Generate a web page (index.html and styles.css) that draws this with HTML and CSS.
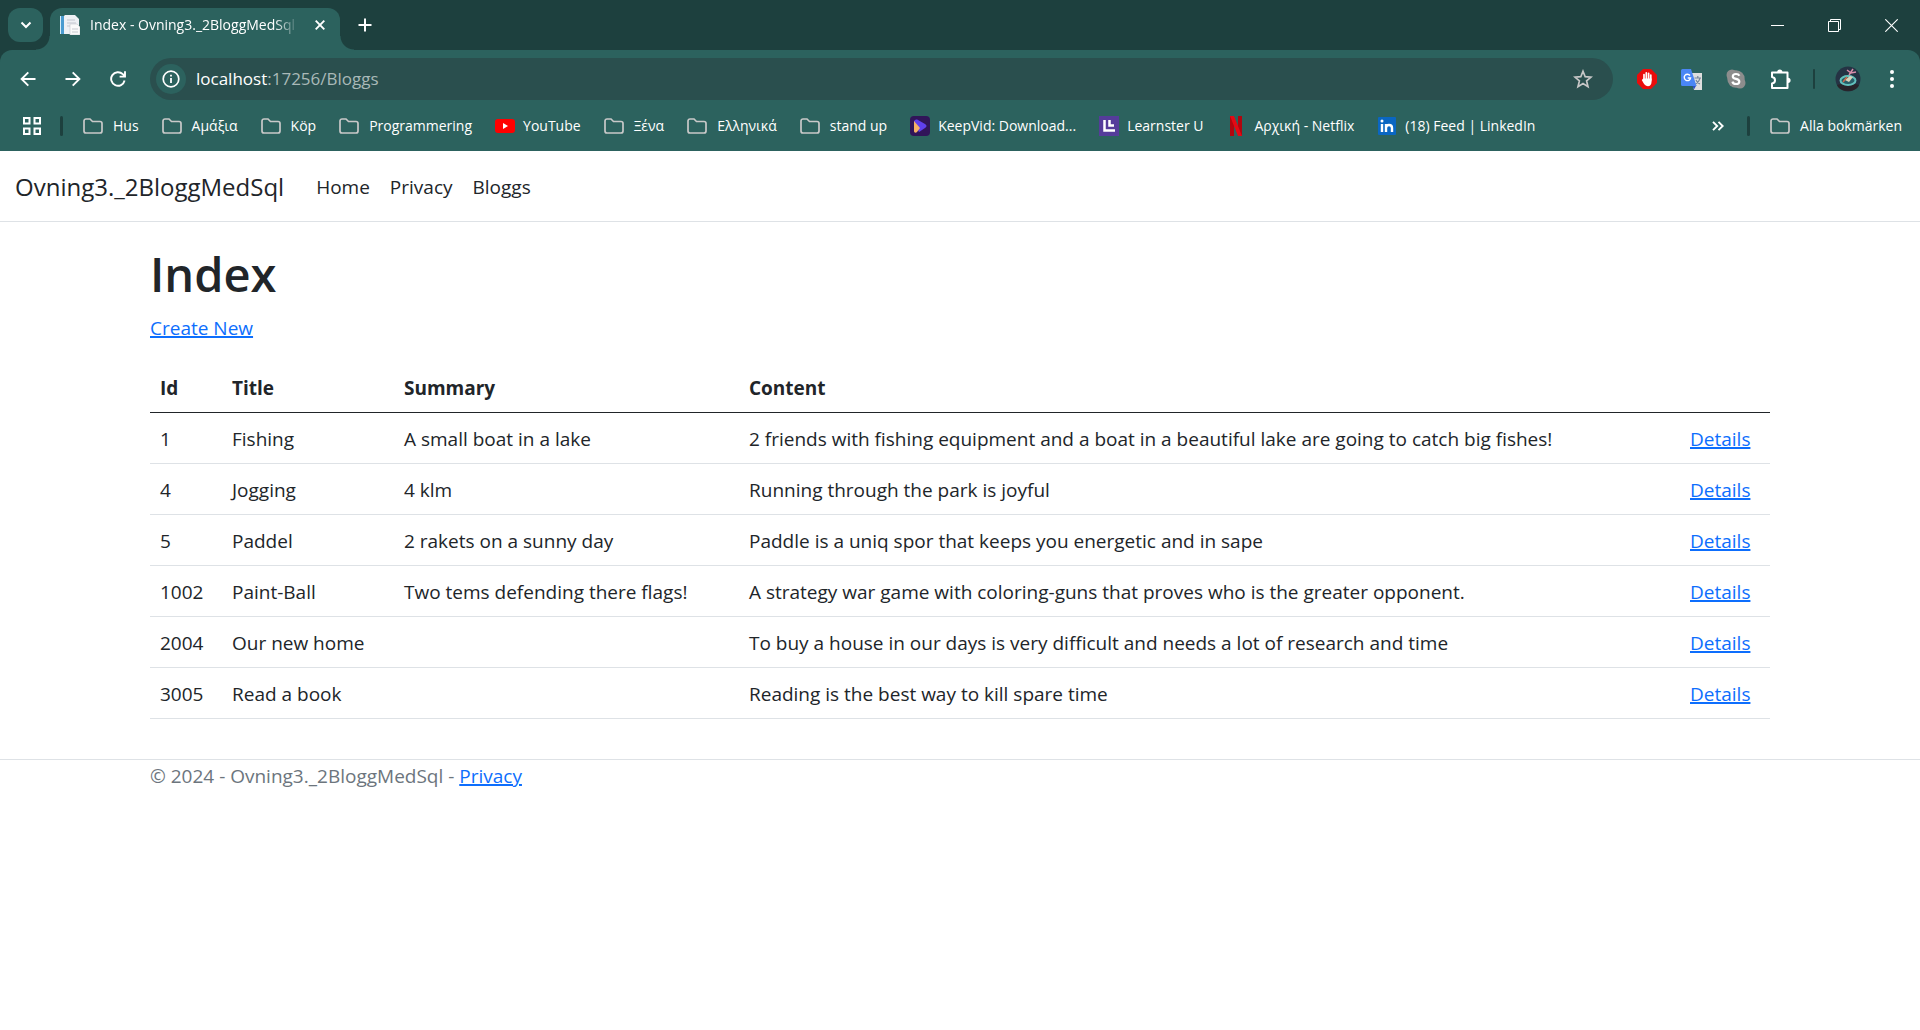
FILE: index.html
```html
<!DOCTYPE html>
<html lang="sv">
<head>
<meta charset="utf-8">
<title>Index - Ovning3._2BloggMedSql</title>
<link rel="stylesheet" href="styles.css">
</head>
<body>
<svg width="0" height="0" class="defs" aria-hidden="true">
  <symbol id="folder" viewBox="0 0 20 16"><path d="M1 3a2 2 0 0 1 2-2h4l2.500 2.500H17a2 2 0 0 1 2 2V13a2 2 0 0 1-2 2H3a2 2 0 0 1-2-2z" fill="none" stroke="#c9c9c9" stroke-width="1.700"/></symbol>
</svg>
<div class="browser">
  <div class="titlebar">
    <button class="tab-search" aria-label="Search tabs"><svg width="12" height="8" viewBox="0 0 12 8"><path d="M1.500 1.500 6 6l4.500-4.500" fill="none" stroke="#fff" stroke-width="2"/></svg></button>
    <div class="tab">
      <svg width="20" height="20" viewBox="0 0 20 20"><path d="M0 1h5v18H0z" fill="#4a9bd0"/><path d="M0 1h1v18H0z" fill="#d8ecf7"/><path d="M5 0h10l4 4v15H4V1z" fill="#eef0f4"/><path d="M7 5h8M7 8h9M7 11h4" stroke="#c3c6cf"/><path d="M10 9h7l3 3v8H10z" fill="#fafafa" stroke="#c8cad0" stroke-width=".6"/><path d="M12 14h6M12 17h6" stroke="#c8cad0"/></svg>
      <span class="tab-title">Index - Ovning3._2BloggMedSql</span>
      <button class="plain" aria-label="Close tab"><svg width="10" height="10" viewBox="0 0 10 10"><path d="m.7.7 8.600 8.600M9.300.7.7 9.300" stroke="#fff" stroke-width="1.900"/></svg></button>
    </div>
    <button class="plain new-tab" aria-label="New tab"><svg width="14" height="14" viewBox="0 0 14 14"><path d="M7 .5v13M.5 7h13" stroke="#fff" stroke-width="2"/></svg></button>
    <div class="window-buttons">
      <button class="plain" aria-label="Minimize"><svg width="13" height="13" viewBox="0 0 13 13"><path d="M0 6.500h13" stroke="#fff"/></svg></button>
      <button class="plain" aria-label="Restore"><svg width="13" height="13" viewBox="0 0 13 13"><path d="M.5 2.500h10v10H.5zM2.500 2V.5h10v10H11" fill="none" stroke="#fff"/></svg></button>
      <button class="plain" aria-label="Close"><svg width="13" height="13" viewBox="0 0 13 13"><path d="m.3.3 12.400 12.400M12.700.3.3 12.700" stroke="#fff" stroke-width="1.100"/></svg></button>
    </div>
  </div>
  <div class="toolbar">
    <div class="nav-buttons">
      <button class="plain" aria-label="Back"><svg width="16" height="16" viewBox="0 0 16 16"><path d="M15.500 8H2M8.300 1.300 1.600 8l6.700 6.700" fill="none" stroke="#fff" stroke-width="1.900"/></svg></button>
      <button class="plain" aria-label="Forward"><svg width="16" height="16" viewBox="0 0 16 16"><path d="M.5 8H14M7.700 1.300 14.400 8l-6.700 6.700" fill="none" stroke="#fff" stroke-width="1.900"/></svg></button>
      <button class="plain" aria-label="Reload"><svg width="16" height="16" viewBox="0 0 16 16"><path d="M14.600 9.500A6.800 6.800 0 1 1 12.800 3.200L15 5.500M15 .3v5.300H9.600" fill="none" stroke="#fff" stroke-width="1.900"/></svg></button>
    </div>
    <div class="omnibox">
      <button class="site-info" aria-label="Site information"><svg width="18" height="18" viewBox="0 0 18 18"><circle cx="9" cy="9" r="7.800" fill="none" stroke="#fff" stroke-width="1.700"/><path d="M9 8v5M9 4.800v1.800" stroke="#fff" stroke-width="1.800"/></svg></button>
      <div class="address"><span class="host">localhost</span>:17256/Bloggs</div>
      <button class="plain" aria-label="Bookmark this page"><svg width="20" height="20" viewBox="0 0 20 20"><path d="m10 2.200 2.200 5.500 5.900.4-4.500 3.800 1.400 5.800-5-3.200-5 3.200 1.400-5.800L1.900 8.100l5.900-.4z" fill="none" stroke="#c7c7c7" stroke-width="1.700"/></svg></button>
    </div>
    <div class="extensions">
      <button class="plain" aria-label="AdBlock"><svg width="20" height="20" viewBox="0 0 20 20"><path d="M6 0h8l6 6v8l-6 6H6l-6-6V6z" fill="#ea0c0c"/><path d="M7 12V5.500M9.300 10V3.800M11.600 10V4.300M13.800 11V6" stroke="#fff" stroke-width="1.700" stroke-linecap="round"/><path d="M6.200 9.500h8.400v3c0 3-1.500 4.700-3.700 4.700-2.600 0-3.500-1.700-4.600-3.400L4.800 11z" fill="#fff"/></svg></button>
      <button class="plain" aria-label="Google Translate"><svg width="21" height="21" viewBox="0 0 21 21"><path d="M9 4h12v17h-8z" fill="#dedede"/><path d="M13.500 9H20M16.800 7v2M19 9c-.6 3-2.500 5-4.500 6M15 11c.8 2 2.500 3.500 4 4" fill="none" stroke="#75869a" stroke-width="1.200"/><path d="M11 16h4.500L13 20.500z" fill="#2d4fc0"/><path d="M1.500 0H10l5.500 17H1.500A1.500 1.500 0 0 1 0 15.500v-14A1.500 1.500 0 0 1 1.500 0z" fill="#4a86f5"/><path d="M9 6.500A3.200 3.200 0 1 0 9.600 9H6.700" fill="none" stroke="#fff" stroke-width="1.400"/></svg></button>
      <button class="plain" aria-label="Skype"><svg width="20" height="20" viewBox="0 0 20 20"><circle cx="10" cy="10" r="8.700" fill="#8d8d8d"/><circle cx="6" cy="6" r="5.500" fill="#8d8d8d"/><circle cx="14" cy="14" r="5.500" fill="#8d8d8d"/><path d="M13.400 6.800C12.600 5.300 11.500 5 10 5 8 5 6.800 6 6.800 7.400c0 3.300 6.500 1.700 6.500 5 0 1.600-1.400 2.600-3.300 2.600-1.800 0-3.100-.8-3.600-2.400" fill="none" stroke="#fff" stroke-width="2.200"/></svg></button>
      <button class="plain" aria-label="Extensions"><svg width="21" height="21" viewBox="0 0 21 21"><path d="M2 3.500H17.500V19H2V14.500c4-.5 4-6 0-6.500z" fill="none" stroke="#fff" stroke-width="2" stroke-linejoin="round"/><path d="M7.200 3a2.600 2.600 0 0 1 5.200 0zM18 8.700a2.600 2.600 0 0 1 0 5.200z" fill="#fff"/></svg></button>
      <span class="separator thin"></span>
      <button class="plain" aria-label="Profile"><svg width="26" height="26" viewBox="0 0 26 26"><circle cx="13" cy="13" r="12.500" fill="#253344"/><path d="M2 19c6-2 16-2 22 0-3 8-19 8-22 0" fill="#28242a"/><ellipse cx="13" cy="14.500" rx="7.500" ry="4.500" fill="#285e68" stroke="#62c1bd" stroke-width="2"/><path d="m10 14 5-4 3 1-4 5z" fill="#d9d3bb"/><path d="m14 9 4-6M12 4l4 3 5-1" fill="none" stroke="#d88dac" stroke-width="1.500"/><path d="m8 16 4-5" stroke="#cf694d" stroke-width="1.500"/></svg></button>
      <button class="plain menu" aria-label="Menu"><svg width="4" height="18" viewBox="0 0 4 18"><g fill="#fff"><circle cx="2" cy="2" r="2"/><circle cx="2" cy="9" r="2"/><circle cx="2" cy="16" r="2"/></g></svg></button>
    </div>
  </div>
  <nav class="bookmarks" aria-label="Bookmarks">
    <button class="plain" aria-label="Tab groups"><svg width="18" height="18" viewBox="0 0 18 18"><path d="M1 1h5.500v5.500H1zM11.500 1H17v5.500h-5.500zM1 11.500h5.500V17H1zM11.500 11.500H17V17h-5.500z" fill="none" stroke="#fff" stroke-width="2"/></svg></button>
    <span class="separator"></span>
    <div class="bookmark-list">
      <a href="#"><svg width="20" height="16"><use href="#folder"/></svg>Hus</a>
      <a href="#"><svg width="20" height="16"><use href="#folder"/></svg>Αμάξια</a>
      <a href="#"><svg width="20" height="16"><use href="#folder"/></svg>Köp</a>
      <a href="#"><svg width="20" height="16"><use href="#folder"/></svg>Programmering</a>
      <a href="#" class="site"><svg width="20" height="14" viewBox="0 0 20 14"><rect width="20" height="14" rx="3" fill="#f00"/><path d="m8 4 5 3-5 3z" fill="#fff"/></svg>YouTube</a>
      <a href="#"><svg width="20" height="16"><use href="#folder"/></svg>Ξένα</a>
      <a href="#"><svg width="20" height="16"><use href="#folder"/></svg>Ελληνικά</a>
      <a href="#"><svg width="20" height="16"><use href="#folder"/></svg>stand up</a>
      <a href="#" class="site"><svg width="20" height="20" viewBox="0 0 20 20"><rect width="20" height="20" rx="4" fill="#311559"/><path d="M4 6c0-2 2-3 4-2l7 4c2 1 2 3 0 4l-6 4z" fill="#6040ee"/><path d="m4 5 6 7-3 4c-1 1-3 1-3-1z" fill="#f7b166"/></svg>KeepVid: Download...</a>
      <a href="#" class="site"><svg width="20" height="20" viewBox="0 0 20 20"><path d="M0 0h20v20H0z" fill="#553c9a"/><path d="M5.500 4v10.500H16M10.500 4v5.500H15" fill="none" stroke="#fff" stroke-width="2.500"/></svg>Learnster U</a>
      <a href="#" class="site"><svg width="20" height="20" viewBox="0 0 20 20"><path d="M4 0h4v20H4zM12 0h4v20h-4z" fill="#b1060f"/><path d="M4 0h4l8 20h-4z" fill="#e50914"/></svg>Αρχική - Netflix</a>
      <a href="#" class="site"><svg width="20" height="18" viewBox="0 0 20 18"><rect x="1" width="18" height="18" rx="1" fill="#0a66c2"/><path d="M5 7v8M9 7v8M9 11c0-4 6-4 6 0v4" fill="none" stroke="#fff" stroke-width="2.400"/><circle cx="5" cy="4" r="1.500" fill="#fff"/></svg>(18) Feed | LinkedIn</a>
    </div>
    <button class="plain more" aria-label="More bookmarks"><svg width="12" height="10" viewBox="0 0 12 10"><path d="m1 .8 4.200 4.200L1 9.200M6.500.8 10.700 5 6.500 9.200" fill="none" stroke="#fff" stroke-width="1.900"/></svg></button>
    <span class="separator"></span>
    <a href="#"><svg width="20" height="16"><use href="#folder"/></svg>Alla bokmärken</a>
  </nav>
</div>
<header class="navbar">
  <a href="#" class="brand">Ovning3._2BloggMedSql</a>
  <nav class="nav-links"><a href="#">Home</a><a href="#">Privacy</a><a href="#">Bloggs</a></nav>
</header>
<main class="container">
  <h1>Index</h1>
  <p><a href="#">Create New</a></p>
  <table>
    <colgroup><col class="col-id"><col class="col-title"><col class="col-summary"><col><col class="col-actions"></colgroup>
    <thead><tr><th>Id</th><th>Title</th><th>Summary</th><th>Content</th><th></th></tr></thead>
    <tbody>
      <tr><td>1</td><td>Fishing</td><td>A small boat in a lake</td><td>2 friends with fishing equipment and a boat in a beautiful lake are going to catch big fishes!</td><td><a href="#">Details</a></td></tr>
      <tr><td>4</td><td>Jogging</td><td>4 klm</td><td>Running through the park is joyful</td><td><a href="#">Details</a></td></tr>
      <tr><td>5</td><td>Paddel</td><td>2 rakets on a sunny day</td><td>Paddle is a uniq spor that keeps you energetic and in sape</td><td><a href="#">Details</a></td></tr>
      <tr><td>1002</td><td>Paint-Ball</td><td>Two tems defending there flags!</td><td>A strategy war game with coloring-guns that proves who is the greater opponent.</td><td><a href="#">Details</a></td></tr>
      <tr><td>2004</td><td>Our new home</td><td></td><td>To buy a house in our days is very difficult and needs a lot of research and time</td><td><a href="#">Details</a></td></tr>
      <tr><td>3005</td><td>Read a book</td><td></td><td>Reading is the best way to kill spare time</td><td><a href="#">Details</a></td></tr>
    </tbody>
  </table>
</main>
<footer><div class="container">© 2024 - Ovning3._2BloggMedSql - <a href="#">Privacy</a></div></footer>
</body>
</html>
```
FILE: styles.css
```css
* { box-sizing: border-box; }
body {
  margin: 0;
  background: #fff;
  color: #212529;
  font: 19px/30px "Segoe UI", "Open Sans", "Noto Sans", sans-serif;
}
svg { display: block; flex: none; }
.defs { display: none; }
a { color: #0d6efd; text-decoration-thickness: 2px; }

/* Browser window */
.browser { background: #1d403e; color: #fff; font-size: 14px; line-height: 20px; }
.browser a { color: #fff; text-decoration: none; }
.plain, .tab-search, .site-info {
  display: flex;
  align-items: center;
  justify-content: center;
  border: 0;
  padding: 0;
  background: none;
}
.titlebar { display: flex; align-items: flex-end; height: 50px; padding-left: 8px; }
.tab-search {
  width: 35px;
  height: 34px;
  margin: 0 7px 8px 0;
  border-radius: 12px;
  background: #2c625e;
}
.tab {
  position: relative;
  display: flex;
  align-items: center;
  width: 290px;
  height: 42px;
  padding: 0 15px 8px 10px;
  border-radius: 12px 12px 0 0;
  background: #2c625e;
}
.tab::before, .tab::after {
  content: "";
  position: absolute;
  bottom: 0;
  width: 14px;
  height: 14px;
}
.tab::before { right: 100%; background: radial-gradient(circle at 0 0, transparent 13px, #2c625e 14px); }
.tab::after { left: 100%; background: radial-gradient(circle at 100% 0, transparent 13px, #2c625e 14px); }
.tab-title {
  flex: 1;
  margin: 0 16px 0 10px;
  overflow: hidden;
  white-space: nowrap;
  mask-image: linear-gradient(to right, #000 88%, transparent);
}
.new-tab { width: 50px; height: 50px; }
.window-buttons { display: flex; align-self: stretch; margin-left: auto; }
.window-buttons button { width: 57px; }

.toolbar {
  display: flex;
  align-items: center;
  height: 58px;
  padding: 0 21px 0 20px;
  border-radius: 12px 12px 0 0;
  background: #2c625e;
}
.nav-buttons { display: flex; gap: 29px; margin-right: 24px; }
.omnibox {
  display: flex;
  flex: 1;
  align-items: center;
  height: 42px;
  padding: 0 20px 0 6px;
  border-radius: 21px;
  background: #2a4f4e;
}
.site-info { width: 30px; height: 30px; border-radius: 50%; background: #2c625e; }
.address { flex: 1; margin-left: 10px; color: #a9b9b8; font-size: 17px; }
.host { color: #fff; }
.extensions { display: flex; align-items: center; gap: 24px; margin-left: 24px; }
.separator { width: 3px; height: 20px; border-radius: 2px; background: #1d403e; }
.extensions .thin { width: 2px; margin: 0 -4px 0 -2px; }
.menu { width: 14px; }

.bookmarks {
  display: flex;
  align-items: center;
  height: 43px;
  padding: 0 18px 8px 23px;
  background: #2c625e;
}
.bookmarks a { display: flex; align-items: center; gap: 10px; white-space: nowrap; }
.bookmarks .site { gap: 8px; }
.bookmarks > .separator { margin: 0 20px 0 19px; }
.bookmark-list { display: flex; gap: 23px; }
.bookmarks .more { margin: 0 4px 0 auto; }

/* Page */
.navbar {
  display: flex;
  align-items: center;
  gap: 22px;
  padding: 21px 15px 19px;
  border-bottom: 1px solid #dee2e6;
}
.navbar a { color: #212529; text-decoration: none; }
.navbar .brand { font-size: 24px; }
.nav-links { display: flex; }
.nav-links a { padding: 0 10px; }
.container { max-width: 1650px; margin: 0 auto; padding: 0 15px; }
main.container { padding-top: 22px; padding-bottom: 40px; }
h1 { margin: 0 0 9px; font-size: 47px; font-weight: 600; line-height: 60px; }
p { margin: 0 0 19px; }
table { width: 100%; border-collapse: separate; border-spacing: 0; table-layout: fixed; text-align: left; }
th, td { padding: 11px 10px 9px; border-bottom: 1px solid #dee2e6; }
th { height: 51px; border-color: #212529; }
.col-id { width: 72px; }
.col-title { width: 172px; }
.col-summary { width: 345px; }
.col-actions { width: 90px; }
footer { border-top: 1px solid #dee2e6; color: #6c757d; }
footer .container { padding-top: 1px; }
```
